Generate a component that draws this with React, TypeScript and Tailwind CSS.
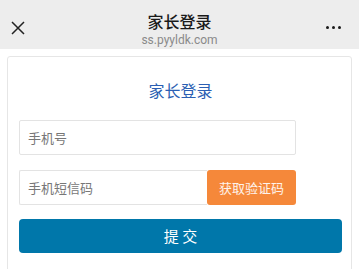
export default function App() {
  return (
    <div className="w-[359px] h-[269px] overflow-hidden bg-white font-['Noto_Sans_CJK_SC',sans-serif]">
      {/* WeChat style top bar */}
      <div className="relative h-[49px] bg-[#ededed] flex flex-col items-center">
        <svg className="absolute left-[11px] top-[21px]" width="14" height="14" viewBox="0 0 14 14">
          <path d="M1 1L13 13M13 1L1 13" stroke="#222" strokeWidth="1.5" fill="none" />
        </svg>
        <div className="absolute right-[18px] top-[26px] flex gap-[3px]">
          <span className="w-[3px] h-[3px] rounded-full bg-[#1a1a1a]" />
          <span className="w-[3px] h-[3px] rounded-full bg-[#1a1a1a]" />
          <span className="w-[3px] h-[3px] rounded-full bg-[#1a1a1a]" />
        </div>
        <div className="mt-[10px] text-[16px] leading-[22px] text-[#1a1a1a] font-medium">家长登录</div>
        <div className="mt-[1px] text-[12px] leading-[15px] text-[#8a8a8a] font-['Roboto',sans-serif]">ss.pyyldk.com</div>
      </div>

      {/* Login card */}
      <div className="mx-[7px] mt-[7px] h-[240px] border border-[#e6e6e6] rounded-[3px] pl-[11px] pr-[9px] pt-[22px]">
        <h2 className="text-center text-[16px] leading-[22px] text-[#2b5fb3]">家长登录</h2>

        <input
          placeholder="手机号"
          className="mt-[19px] block w-[277px] h-[35px] border border-[#e3e3e3] rounded-[2px] px-[8px] text-[13px] placeholder:text-[#777] outline-none"
        />

        <div className="mt-[15px] flex h-[35px]">
          <input
            placeholder="手机短信码"
            className="w-[188px] h-full border border-[#e3e3e3] border-r-0 rounded-l-[2px] px-[8px] text-[13px] placeholder:text-[#777] outline-none"
          />
          <button className="w-[89px] h-full bg-[#f5883a] rounded-[3px] text-[13px] text-white/90">
            获取验证码
          </button>
        </div>

        <button className="mt-[14px] block w-full h-[34px] bg-[#0077aa] rounded-[4px] text-[15px] text-white">
          提 交
        </button>
      </div>
    </div>
  );
}
